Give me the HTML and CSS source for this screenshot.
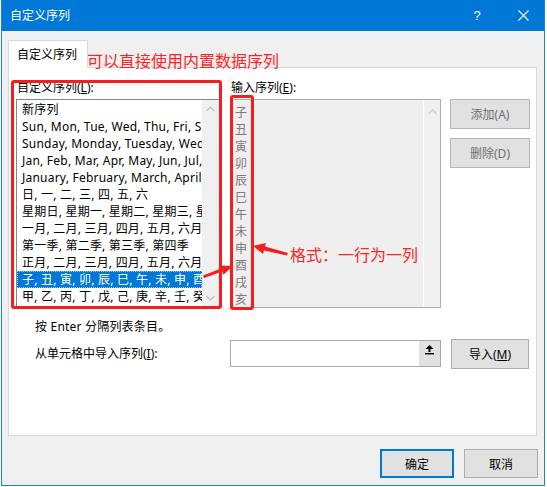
FILE: index.html
```html
<!DOCTYPE html>
<html lang="zh-CN">
<head>
<meta charset="utf-8">
<title>自定义序列</title>
<link rel="stylesheet" href="styles.css">
</head>
<body>
<div class="window">
  <div class="titlebar">
    <span class="title">自定义序列</span>
    <span class="tb-help">?</span>
    <span class="tb-close">
      <svg width="11" height="11" viewBox="0 0 11 11"><path d="M0.5 0.5 L10.5 10.5 M10.5 0.5 L0.5 10.5" stroke="#fff" stroke-width="1.1" fill="none"/></svg>
    </span>
  </div>
  <div class="body">
    <div class="tabs"><div class="tab">自定义序列</div></div>
    <div class="panel">
      <div class="lists">
        <div class="col col-left">
          <div class="label">自定义序列(<u>L</u>):</div>
          <div class="listbox">
            <div class="items">
              <div class="item">新序列</div>
              <div class="item">Sun, Mon, Tue, Wed, Thu, Fri, Sat</div>
              <div class="item">Sunday, Monday, Tuesday, Wednesday, Thursday, Friday, Saturday</div>
              <div class="item">Jan, Feb, Mar, Apr, May, Jun, Jul, Aug, Sep, Oct, Nov, Dec</div>
              <div class="item">January, February, March, April, May, June, July, August, September, October, November, December</div>
              <div class="item">日, 一, 二, 三, 四, 五, 六</div>
              <div class="item">星期日, 星期一, 星期二, 星期三, 星期四, 星期五, 星期六</div>
              <div class="item">一月, 二月, 三月, 四月, 五月, 六月, 七月, 八月, 九月, 十月, 十一月, 十二月</div>
              <div class="item">第一季, 第二季, 第三季, 第四季</div>
              <div class="item">正月, 二月, 三月, 四月, 五月, 六月, 七月, 八月, 九月, 十月, 十一月, 腊月</div>
              <div class="item selected">子, 丑, 寅, 卯, 辰, 巳, 午, 未, 申, 酉, 戌, 亥</div>
              <div class="item">甲, 乙, 丙, 丁, 戊, 己, 庚, 辛, 壬, 癸</div>
            </div>
            <div class="vscroll">
              <svg width="9" height="6" viewBox="0 0 9 6"><path d="M0.5 5 L4.5 1 L8.5 5" stroke="#c4c4c4" stroke-width="1.5" fill="none"/></svg>
              <svg width="9" height="6" viewBox="0 0 9 6"><path d="M0.5 1 L4.5 5 L8.5 1" stroke="#c4c4c4" stroke-width="1.5" fill="none"/></svg>
            </div>
          </div>
        </div>
        <div class="col col-mid">
          <div class="label">输入序列(<u>E</u>):</div>
          <div class="entrybox">
            <div class="entries">
              <div>子</div><div>丑</div><div>寅</div><div>卯</div><div>辰</div><div>巳</div>
              <div>午</div><div>未</div><div>申</div><div>酉</div><div>戌</div><div>亥</div>
            </div>
            <div class="vscroll vscroll-dis">
              <svg width="9" height="6" viewBox="0 0 9 6"><path d="M0.5 5 L4.5 1 L8.5 5" stroke="#cfcfcf" stroke-width="1.5" fill="none"/></svg>
            </div>
          </div>
        </div>
        <div class="col col-btns">
          <button class="btn btn-dis">添加(A)</button>
          <button class="btn btn-dis">删除(D)</button>
        </div>
      </div>
      <div class="hint">按 Enter 分隔列表条目。</div>
      <div class="import-row">
        <span class="import-label">从单元格中导入序列(<u>I</u>):</span>
        <div class="refedit">
          <span class="collapse">
            <svg width="9" height="10" viewBox="0 0 9 10"><path d="M4.5 0 L0.5 4 L3.5 4 L3.5 7 L5.5 7 L5.5 4 L8.5 4 Z" fill="#000"/><rect x="0" y="8" width="9" height="1.4" fill="#000"/></svg>
          </span>
        </div>
        <button class="btn btn-import">导入(<u>M</u>)</button>
      </div>
    </div>
    <div class="footer">
      <button class="btn btn-ok">确定</button>
      <button class="btn btn-cancel">取消</button>
    </div>
  </div>
</div>

<div class="note note-top">可以直接使用内置数据序列</div>
<div class="note note-side">格式：一行为一列</div>
<div class="redbox redbox-list"></div>
<div class="redbox redbox-entry"></div>
<svg class="arrows" width="547" height="487" viewBox="0 0 547 487">
  <polygon points="253,246 266,243 265,246.6 288,253 287,255.5 264,250.4 263,254" fill="#f51d1d"/>
  <polygon points="233,266 220,265.4 221,268.4 203,275.5 204,278 222.3,271.6 223.4,274.8" fill="#f51d1d"/>
</svg>
</body>
</html>
```

FILE: styles.css
```css
html, body {
  margin: 0;
  padding: 0;
}
body {
  position: relative;
  width: 547px;
  height: 487px;
  background: #ffffff;
  font-family: "Noto Sans", "Noto Sans CJK SC", sans-serif;
  font-size: 12px;
  color: #000;
  overflow: hidden;
}
.window {
  margin-left: 1px;
  width: 544px;
  height: 486px;
  box-sizing: border-box;
  border: 1px solid #1883d7;
  border-top: none;
  background: #f0f0f0;
  display: flex;
  flex-direction: column;
}
.titlebar {
  height: 31px;
  flex: none;
  background: #0078d7;
  color: #fff;
  display: flex;
  align-items: center;
  padding-left: 8px;
}
.title {
  flex: 1;
  line-height: 16px;
}
.tb-help {
  width: 50px;
  text-align: center;
  font-family: "Liberation Sans", sans-serif;
  font-size: 13px;
}
.tb-close {
  width: 42px;
  display: flex;
  justify-content: center;
  align-items: center;
}
.body {
  flex: 1;
  padding: 9px 7px 0 6px;
  display: flex;
  flex-direction: column;
}
.tabs {
  height: 28px;
  display: flex;
  position: relative;
  z-index: 1;
}
.tab {
  width: 80px;
  height: 28px;
  box-sizing: border-box;
  background: #fff;
  border: 1px solid #d9d9d9;
  border-bottom: none;
  padding-left: 8px;
  line-height: 28px;
}
.panel {
  margin-top: -1px;
  height: 369px;
  box-sizing: border-box;
  border: 1px solid #d9d9d9;
  background: #fff;
  padding: 12px 0 0 7px;
}
.lists {
  display: flex;
}
.col {
  display: flex;
  flex-direction: column;
}
.col-left { width: 204px; }
.col-mid { width: 211px; margin-left: 10px; }
.col-btns { width: 80px; margin-left: 9px; padding-top: 19px; gap: 9px; }
.label {
  height: 16px;
  line-height: 16px;
  padding-left: 1px;
  margin-bottom: 3px;
}
u { text-decoration: underline; text-underline-offset: 1px; }
.listbox {
  height: 209px;
  box-sizing: border-box;
  border: 1px solid #828790;
  background: #fff;
  display: flex;
}
.items {
  flex: 1;
  overflow: hidden;
  padding-top: 1px;
}
.item {
  height: 17px;
  line-height: 17px;
  padding-left: 5px;
  white-space: nowrap;
  letter-spacing: 0.22px;
}
.item.selected {
  background: #0078d7;
  color: #fff;
  outline: 1px dotted #9cc7ee;
  outline-offset: -1px;
}
.vscroll {
  width: 17px;
  flex: none;
  background: #f0f0f0;
  display: flex;
  flex-direction: column;
  align-items: center;
  justify-content: space-between;
  padding: 6px 0 6px;
  box-sizing: border-box;
}
.entrybox {
  height: 209px;
  box-sizing: border-box;
  border: 1px solid #adadad;
  background: #efefef;
  display: flex;
}
.entries {
  flex: 1;
  padding: 4px 0 0 4px;
  color: #7a7a7a;
}
.entries div {
  height: 17px;
  line-height: 17px;
}
.vscroll-dis {
  border-left: 1px solid #fff;
  justify-content: flex-start;
  padding-top: 9px;
}
.btn {
  font-family: "Noto Sans", "Noto Sans CJK SC", sans-serif;
  font-size: 12px;
  background: #e1e1e1;
  border: 1px solid #adadad;
  box-sizing: border-box;
  padding: 0;
  color: #000;
  border-radius: 0;
}
.btn-dis {
  width: 80px;
  height: 30px;
  color: #6f6f6f;
  border-color: #b5b5b5;
}
.hint {
  margin-top: 11px;
  margin-left: 19px;
  line-height: 16px;
  height: 16px;
  letter-spacing: 0.2px;
}
.import-row {
  margin-top: 4px;
  height: 30px;
  display: flex;
  align-items: center;
  padding-left: 19px;
}
.import-label {
  width: 195px;
  flex: none;
  line-height: 16px;
}
.refedit {
  width: 211px;
  height: 27px;
  flex: none;
  box-sizing: border-box;
  border: 1px solid #a9a9a9;
  background: #fff;
  display: flex;
  justify-content: flex-end;
  align-self: flex-start;
  margin-top: 1px;
}
.collapse {
  width: 21px;
  height: 25px;
  background: #e1e1e1;
  display: flex;
  justify-content: center;
  padding-top: 4px;
  box-sizing: border-box;
}
.btn-import {
  width: 78px;
  height: 30px;
  margin-left: 10px;
}
.footer {
  display: flex;
  justify-content: flex-end;
  gap: 10px;
  padding-top: 13px;
  margin-right: -1px;
}
.btn-ok, .btn-cancel {
  width: 74px;
  height: 29px;
}
.btn-ok {
  border: 2px solid #0078d7;
}

/* annotations */
.note {
  position: absolute;
  color: #ff2424;
  font-family: "Noto Sans CJK SC", sans-serif;
  font-size: 16px;
  line-height: 20px;
  white-space: nowrap;
}
.note-top {
  left: 87px;
  top: 50px;
}
.note-side {
  left: 290px;
  top: 244px;
}
.redbox {
  position: absolute;
  box-sizing: border-box;
  border: 3px solid #f51d1d;
  border-radius: 3px;
}
.redbox-list {
  left: 11px;
  top: 80px;
  width: 211px;
  height: 229px;
}
.redbox-entry {
  left: 230px;
  top: 95px;
  width: 24px;
  height: 215px;
}
.arrows {
  position: absolute;
  left: 0;
  top: 0;
  pointer-events: none;
}
```
